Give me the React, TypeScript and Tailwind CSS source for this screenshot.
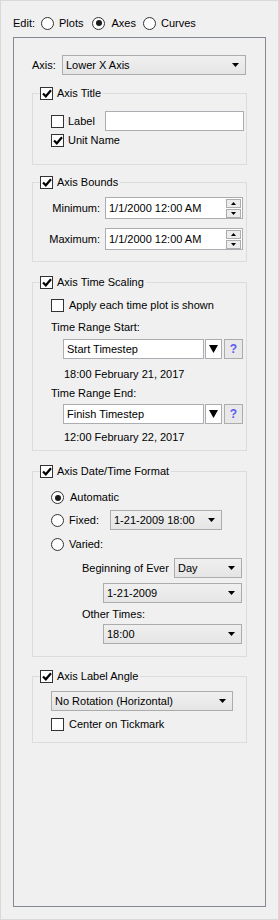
import type { ReactNode } from 'react'

const font = { fontFamily: '"Liberation Sans", Arial, sans-serif' }

function Check({ on }: { on?: boolean }) {
  return (
    <span className="flex h-[13px] w-[13px] shrink-0 items-center justify-center border border-[#333333] bg-white">
      {on && (
        <svg width="10" height="9" viewBox="0 0 10 9">
          <path d="M1 4.5 L3.8 7.3 L9 1.2" fill="none" stroke="#000" strokeWidth="2.2" />
        </svg>
      )}
    </span>
  )
}

function Radio({ on }: { on?: boolean }) {
  return (
    <span className="flex h-[13px] w-[13px] shrink-0 items-center justify-center rounded-full border border-[#333333] bg-white">
      {on && <span className="h-[6px] w-[6px] rounded-full bg-[#1a1a1a]" />}
    </span>
  )
}

function Arrow() {
  return (
    <svg width="7" height="4" viewBox="0 0 7 4" className="shrink-0">
      <path d="M0 0 H7 L3.5 4 Z" fill="#000" />
    </svg>
  )
}

// combo box, windows style
function Combo({ value, className }: { value: string; className: string }) {
  return (
    <div className={`flex h-[20px] items-center justify-between border border-[#acacac] bg-gradient-to-b from-[#f0f0f0] to-[#e5e5e5] pl-[3px] pr-[6px] ${className}`}>
      <span className="whitespace-nowrap">{value}</span>
      <Arrow />
    </div>
  )
}

function Spin({ value }: { value: string }) {
  return (
    <div className="flex h-[22px] w-[138px] items-center justify-between border border-[#abadb3] bg-white pl-[3px] pr-[1px]">
      <span className="whitespace-nowrap">{value}</span>
      <div className="flex flex-col gap-[1px]">
        <span className="flex h-[9px] w-[15px] items-center justify-center border border-[#acacac] bg-[#ececec]">
          <svg width="5" height="3" viewBox="0 0 5 3"><path d="M0 3 H5 L2.5 0 Z" fill="#000" /></svg>
        </span>
        <span className="flex h-[9px] w-[15px] items-center justify-center border border-[#acacac] bg-[#ececec]">
          <svg width="5" height="3" viewBox="0 0 5 3"><path d="M0 0 H5 L2.5 3 Z" fill="#000" /></svg>
        </span>
      </div>
    </div>
  )
}

function Group({ title, className, children }: { title: string; className: string; children: ReactNode }) {
  return (
    <fieldset className={`ml-[18px] w-[215px] border border-[#dcdcdc] ${className}`}>
      <legend className="ml-[7px] flex h-[13px] items-center gap-[4px] pr-[2px] leading-[13px]">
        <Check on />
        <span>{title}</span>
      </legend>
      {children}
    </fieldset>
  )
}

function TimeRange({ value }: { value: string }) {
  return (
    <div className="ml-[30px] flex h-[20px] items-center">
      <div className="flex h-[20px] w-[141px] items-center border border-[#abadb3] bg-white pl-[3px]">{value}</div>
      <span className="ml-[1px] flex h-[20px] w-[17px] items-center justify-center border border-[#acacac] bg-white">
        <svg width="9" height="8" viewBox="0 0 9 8"><path d="M0 0 H9 L4.5 8 Z" fill="#000" /></svg>
      </span>
      <span className="ml-[2px] flex h-[20px] w-[19px] items-center justify-center border border-[#acacac] bg-[#e8e8e8] text-[12px] font-bold text-[#5b5bf0]">?</span>
    </div>
  )
}

export default function App() {
  return (
    <div style={font} className="h-[920px] w-[279px] border border-[#d9d9d9] bg-[#f0f0f0] text-[11px] text-black">
      {/* edit mode */}
      <div className="mt-[14px] flex h-[16px] items-center pl-[12px]">
        <span>Edit:</span>
        <span className="ml-[6px]"><Radio /></span>
        <span className="ml-[5px]">Plots</span>
        <span className="ml-[9px]"><Radio on /></span>
        <span className="ml-[6px]">Axes</span>
        <span className="ml-[7px]"><Radio /></span>
        <span className="ml-[5px]">Curves</span>
      </div>

      <div className="ml-[12px] mt-[6px] h-[870px] w-[253px] border border-[#838a94]">
        <div className="mt-[17px] flex h-[20px] items-center pl-[18px]">
          <span className="w-[30px]">Axis:</span>
          <Combo value="Lower X Axis" className="w-[184px]" />
        </div>

        <Group title="Axis Title" className="mt-[12px] pb-[16px]">
          <div className="mt-[11px] flex h-[20px] items-center pl-[18px]">
            <Check />
            <span className="ml-[4px] w-[37px]">Label</span>
            <div className="h-[20px] w-[139px] border border-[#abadb3] bg-white" />
          </div>
          <div className="mt-[2px] flex h-[15px] items-center pl-[18px]">
            <Check on />
            <span className="ml-[4px]">Unit Name</span>
          </div>
        </Group>

        <Group title="Axis Bounds" className="mt-[11px] pb-[11px]">
          <div className="mt-[8px] flex items-center">
            <span className="w-[67px] text-right">Minimum:</span>
            <span className="ml-[5px]"><Spin value="1/1/2000 12:00 AM" /></span>
          </div>
          <div className="mt-[9px] flex items-center">
            <span className="w-[67px] text-right">Maximum:</span>
            <span className="ml-[5px]"><Spin value="1/1/2000 12:00 AM" /></span>
          </div>
        </Group>

        <Group title="Axis Time Scaling" className="mt-[14px] pb-[6px]">
          <div className="mt-[10px] flex h-[13px] items-center pl-[18px]">
            <Check />
            <span className="ml-[5px]">Apply each time plot is shown</span>
          </div>
          <div className="mt-[8px] flex h-[14px] items-center pl-[18px]">Time Range Start:</div>
          <div className="mt-[5px]"><TimeRange value="Start Timestep" /></div>
          <div className="mt-[8px] flex h-[14px] items-center pl-[31px]">18:00 February 21, 2017</div>
          <div className="mt-[5px] flex h-[14px] items-center pl-[18px]">Time Range End:</div>
          <div className="mt-[4px]"><TimeRange value="Finish Timestep" /></div>
          <div className="mt-[6px] flex h-[14px] items-center pl-[31px]">12:00 February 22, 2017</div>
        </Group>

        <Group title="Axis Date/Time Format" className="mt-[14px] pb-[12px]">
          <div className="mt-[13px] flex h-[13px] items-center pl-[18px]">
            <Radio on />
            <span className="ml-[6px]">Automatic</span>
          </div>
          <div className="mt-[6px] flex h-[20px] items-center pl-[18px]">
            <Radio />
            <span className="ml-[5px] w-[41px]">Fixed:</span>
            <Combo value="1-21-2009 18:00" className="w-[112px]" />
          </div>
          <div className="mt-[8px] flex h-[13px] items-center pl-[18px]">
            <Radio />
            <span className="ml-[5px]">Varied:</span>
          </div>
          <div className="mt-[7px] flex h-[20px] items-center pl-[49px]">
            <span className="w-[87px] overflow-hidden whitespace-nowrap">Beginning of Every</span>
            <Combo value="Day" className="ml-[5px] w-[68px]" />
          </div>
          <div className="mt-[5px] pl-[70px]">
            <Combo value="1-21-2009" className="w-[139px]" />
          </div>
          <div className="mt-[4px] flex h-[14px] items-center pl-[49px]">Other Times:</div>
          <div className="mt-[3px] pl-[70px]">
            <Combo value="18:00" className="w-[139px]" />
          </div>
        </Group>

        <Group title="Axis Label Angle" className="mt-[13px] pb-[11px]">
          <div className="mt-[8px] pl-[18px]">
            <Combo value="No Rotation (Horizontal)" className="w-[182px]" />
          </div>
          <div className="mt-[7px] flex h-[13px] items-center pl-[18px]">
            <Check />
            <span className="ml-[5px]">Center on Tickmark</span>
          </div>
        </Group>
      </div>
    </div>
  )
}
